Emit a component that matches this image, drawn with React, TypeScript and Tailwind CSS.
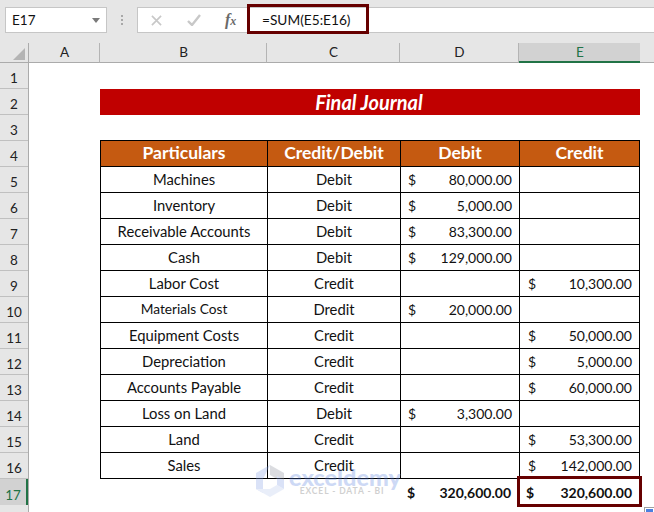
import React from 'react';

const font = { fontFamily: 'Lato, "Open Sans", sans-serif' };

type Row = { n: number; name: string; kind: string; debit?: string; credit?: string };

const rows: Row[] = [
  { n: 5, name: 'Machines', kind: 'Debit', debit: '80,000.00' },
  { n: 6, name: 'Inventory', kind: 'Debit', debit: '5,000.00' },
  { n: 7, name: 'Receivable Accounts', kind: 'Debit', debit: '83,300.00' },
  { n: 8, name: 'Cash', kind: 'Debit', debit: '129,000.00' },
  { n: 9, name: 'Labor Cost', kind: 'Credit', credit: '10,300.00' },
  { n: 10, name: 'Materials Cost', kind: 'Dredit', debit: '20,000.00' },
  { n: 11, name: 'Equipment Costs', kind: 'Credit', credit: '50,000.00' },
  { n: 12, name: 'Depreciation', kind: 'Credit', credit: '5,000.00' },
  { n: 13, name: 'Accounts Payable', kind: 'Credit', credit: '60,000.00' },
  { n: 14, name: 'Loss on Land', kind: 'Debit', debit: '3,300.00' },
  { n: 15, name: 'Land', kind: 'Credit', credit: '53,300.00' },
  { n: 16, name: 'Sales', kind: 'Credit', credit: '142,000.00' },
];

const rowNumbers = Array.from({ length: 17 }, (_, i) => i + 1);

function Money({ value, bold, credit }: { value?: string; bold?: boolean; credit?: boolean }) {
  if (!value) return null;
  return (
    <div
      className={`flex h-full items-center justify-between pr-[7px] text-[14px] ${credit ? 'pl-[8px]' : 'pl-[7px]'} ${
        bold ? 'font-bold' : ''
      }`}
    >
      <span>$</span>
      <span>{value}</span>
    </div>
  );
}

function ColHead({ label, width, active }: { label: string; width: string; active?: boolean }) {
  return (
    <div
      className={`${width} flex items-center justify-center pl-[1px] text-[13.5px] ${
        active
          ? 'bg-[#d2d2d2] border-b-2 border-b-[#217346] text-[#217346]'
          : 'border-r border-r-[#b4b4b4] border-b border-b-[#ababab] text-[#222]'
      }`}
    >
      {label}
    </div>
  );
}

export default function App() {
  return (
    <div className="relative flex h-[512px] w-[654px] flex-col overflow-hidden bg-[#e6e6e6] text-[#111]" style={font}>
      {/* formula bar */}
      <div className="flex h-[33px] pt-[7px]">
        <div className="ml-[5px] flex h-[26px] w-[102px] items-center justify-between border border-[#c6c6c6] bg-white pl-[6px] pr-[6px] text-[13.5px]">
          <span>E17</span>
          <svg width="8" height="5" viewBox="0 0 8 5"><path d="M0 0h8L4 5z" fill="#7a7a7a" /></svg>
        </div>
        <div className="flex w-[30px] flex-col items-center justify-center gap-[2px]">
          <div className="h-[2px] w-[2px] bg-[#a8a8a8]" />
          <div className="h-[2px] w-[2px] bg-[#a8a8a8]" />
          <div className="h-[2px] w-[2px] bg-[#a8a8a8]" />
        </div>
        <div className="flex h-[26px] flex-1 items-center border border-r-0 border-[#c6c6c6] bg-white">
          <div className="flex w-[110px] shrink-0 items-center">
            <svg className="ml-[13px]" width="11" height="11" viewBox="0 0 12 12">
              <path d="M1 1l10 10M11 1L1 11" stroke="#c8c8c8" strokeWidth="1.8" fill="none" />
            </svg>
            <svg className="ml-[25px]" width="14" height="12" viewBox="0 0 14 12">
              <path d="M1 7l4 4 8-10" stroke="#c8c8c8" strokeWidth="2.4" fill="none" />
            </svg>
            <span
              className="ml-[24px] text-[16px] leading-none font-bold italic text-[#6a6a6a]"
              style={{ fontFamily: '"Liberation Serif", serif' }}
            >
              f<span className="text-[12px]">x</span>
            </span>
          </div>
          <span className="pl-[14px] text-[13.7px]">=SUM(E5:E16)</span>
        </div>
      </div>

      {/* column headers */}
      <div className="mt-[10px] flex h-[20px]">
        <div className="flex w-[29px] items-end justify-end border-r border-b border-[#ababab] pb-[2px] pr-[3px]">
          <svg width="12" height="12" viewBox="0 0 12 12"><path d="M12 0v12H0z" fill="#b4b4b4" /></svg>
        </div>
        <ColHead label="A" width="w-[71px]" />
        <ColHead label="B" width="w-[167px]" />
        <ColHead label="C" width="w-[133px]" />
        <ColHead label="D" width="w-[119px]" />
        <ColHead label="E" width="w-[121px]" active />
        <div className="flex-1 border-b border-b-[#ababab]" />
      </div>

      <div className="flex flex-1">
        {/* row headers */}
        <div className="flex w-[29px] flex-col border-r border-r-[#ababab]">
          {rowNumbers.map((n) => (
            <div
              key={n}
              className={`flex h-[26px] shrink-0 items-end justify-center pb-[3px] text-[13.5px] leading-none ${
                n === 17
                  ? 'border-r-2 border-r-[#217346] bg-[#d2d2d2] text-[#217346]'
                  : 'border-b border-b-[#c0c0c0] text-[#222]'
              }`}
            >
              {n}
            </div>
          ))}
        </div>

        {/* sheet */}
        <div className="flex-1 bg-white pl-[71px] text-[14.8px]">
          <div className="h-[26px]" />
          <div className="flex h-[26px] w-[540px] items-center justify-center bg-[#c00000] pr-[2px] pb-[1px] text-[20px] font-bold italic text-white">
            Final Journal
          </div>
          <div className="h-[25px]" />

          <div className="flex h-[27px] w-[540px] border border-black bg-[#c55a11] text-[17.5px] font-bold text-white">
            <div className="flex w-[167px] items-center justify-center border-r border-black">Particulars</div>
            <div className="flex w-[133px] items-center justify-center border-r border-black">Credit/Debit</div>
            <div className="flex w-[119px] items-center justify-center border-r border-black">Debit</div>
            <div className="flex flex-1 items-center justify-center">Credit</div>
          </div>

          {rows.map((r) => (
            <div key={r.n} className="flex h-[26px] w-[540px] border-x border-b border-black">
              <div
                className={`flex w-[167px] items-center justify-center border-r border-black ${
                  r.n === 10 ? 'text-[13.7px]' : ''
                }`}
              >
                {r.name}
              </div>
              <div className="w-[133px] border-r border-black">
                <div className="flex h-full items-center justify-center">{r.kind}</div>
              </div>
              <div className="w-[119px] border-r border-black">
                <Money value={r.debit} />
              </div>
              <div className="flex-1">
                <Money value={r.credit} credit />
              </div>
            </div>
          ))}

          <div className="flex h-[26px] w-[540px]">
            <div className="w-[300px]" />
            <div className="w-[119px] pr-[1px]">
              <Money value="320,600.00" bold />
            </div>
            <div className="flex-1 pr-[1px]">
              <Money value="320,600.00" bold />
            </div>
          </div>
        </div>
      </div>

      {/* highlight boxes */}
      <div className="absolute left-[247px] top-[4px] h-[30px] w-[122px] border-[3px] border-[#660000]" />
      <div className="absolute left-[517px] top-[476px] h-[31px] w-[125px] border-[3px] border-[#660000]" />

      {/* corner button */}
      <div className="absolute left-[644px] top-[507px] h-[5px] w-[10px] border-l border-t border-[#a0a0a0] bg-white pl-[1px] pt-[1px]">
        <div className="h-full w-[7px] bg-[#4a7fe0]" />
      </div>

      {/* watermark */}
      <div className="absolute left-[256px] top-[465px] flex items-center gap-[5px] opacity-30">
        <svg width="28" height="32" viewBox="0 0 28 32">
          <path d="M14 0l14 8v10l-14-8z" fill="#8a8f9c" />
          <path d="M14 0L0 8v16l7 4V14z" fill="#86a3e6" />
          <path d="M0 24l14 8 14-8-7-4-7 4z" fill="#b9c8ee" />
          <path d="M21 11l7 4v9l-7-4z" fill="#86a3e6" />
        </svg>
        <div className="flex flex-col items-center leading-none">
          <span className="text-[23.5px] font-black leading-[20px] text-[#5b83e0]">exceldemy</span>
          <span className="pr-[6px] text-[8.5px] font-bold tracking-[0.9px] text-[#666]">EXCEL - DATA - BI</span>
        </div>
      </div>
    </div>
  );
}
